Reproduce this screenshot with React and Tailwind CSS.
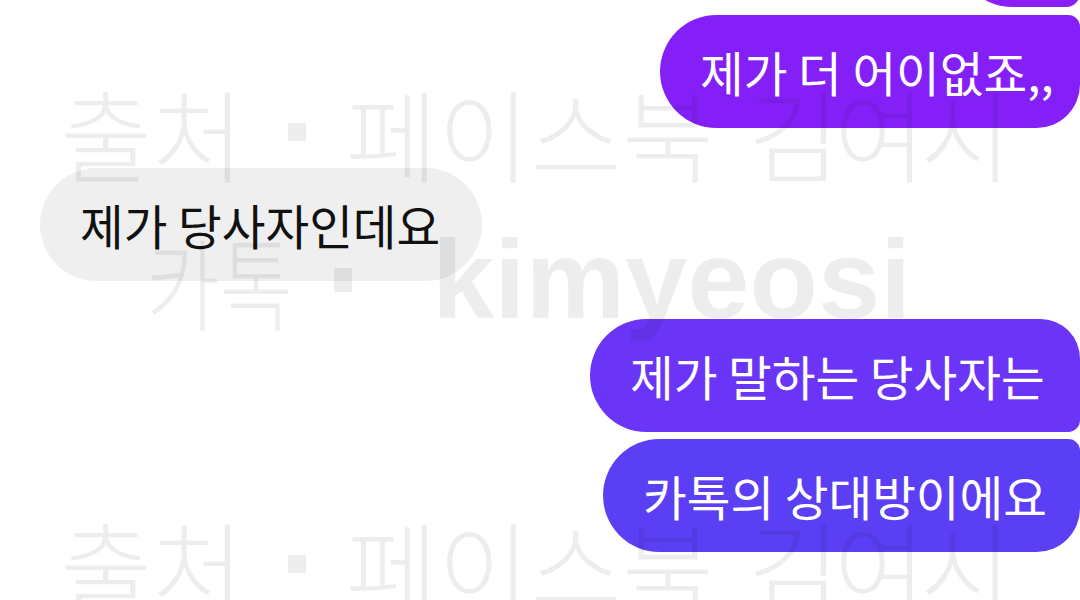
import React from "react";

const KR = "font-['Noto_Sans_CJK_KR','Noto_Sans',sans-serif]";

function Bubble({ children, className }) {
  return (
    <div
      className={
        "h-[113px] flex items-center pl-[40px] text-[47.5px] leading-none whitespace-nowrap " +
        className
      }
    >
      {children}
    </div>
  );
}

function WatermarkSource({ className }) {
  return (
    <div className={"flex items-center text-[100px] leading-none font-light whitespace-nowrap " + className}>
      <span className="ml-[60px]">출처</span>
      <span className="ml-[44px] inline-block w-[18px] h-[18px] bg-[rgba(0,0,0,0.07)]" />
      <span className="ml-[40px]">페이스북</span>
      <span className="ml-[34px] tracking-[-6px]">김여시</span>
    </div>
  );
}

export default function App() {
  return (
    <div className={"relative w-[1080px] h-[600px] overflow-hidden bg-white " + KR}>
      <div className="flex flex-col">
        <div className="flex justify-end -mt-[106px]">
          <div className="h-[113px] w-[124px] rounded-l-[57px] rounded-br-[14px] bg-[#8a1ff8]" />
        </div>
        <div className="flex justify-end mt-[8px]">
          <Bubble className="w-[420px] rounded-l-[57px] rounded-tr-[12px] rounded-br-[44px] bg-[#8420f7] text-white">
            제가 더 어이없죠,,
          </Bubble>
        </div>
        <div className="flex justify-start pl-[40px] mt-[40px]">
          <Bubble className="w-[442px] rounded-[57px] bg-[#efefef] text-[#111111]">
            제가 당사자인데요
          </Bubble>
        </div>
        <div className="flex justify-end mt-[38px]">
          <Bubble className="w-[490px] rounded-l-[57px] rounded-tr-[40px] rounded-br-[12px] bg-[#6a35f7] text-white">
            제가 말하는 당사자는
          </Bubble>
        </div>
        <div className="flex justify-end mt-[7px]">
          <Bubble className="w-[477px] rounded-l-[57px] rounded-tr-[12px] rounded-br-[44px] bg-[#5b3ff4] text-white">
            카톡의 상대방이에요
          </Bubble>
        </div>
      </div>

      <div className="pointer-events-none absolute inset-0 text-[rgba(0,0,0,0.07)]">
        <WatermarkSource className="mt-[82px]" />
        <div className="flex items-center leading-none whitespace-nowrap mt-[42px]">
          <span className="ml-[146px] w-[150px] text-[100px] font-light">
            <span className="inline-block scale-x-[0.8] origin-left">카톡</span>
          </span>
          <span className="ml-[38px] inline-block w-[18px] h-[24px] bg-[rgba(0,0,0,0.07)]" />
          <span className="ml-[80px] text-[112px] font-bold font-['Liberation_Sans',Arial,sans-serif]">kimyeosi</span>
        </div>
        <WatermarkSource className="mt-[178px]" />
      </div>
    </div>
  );
}
